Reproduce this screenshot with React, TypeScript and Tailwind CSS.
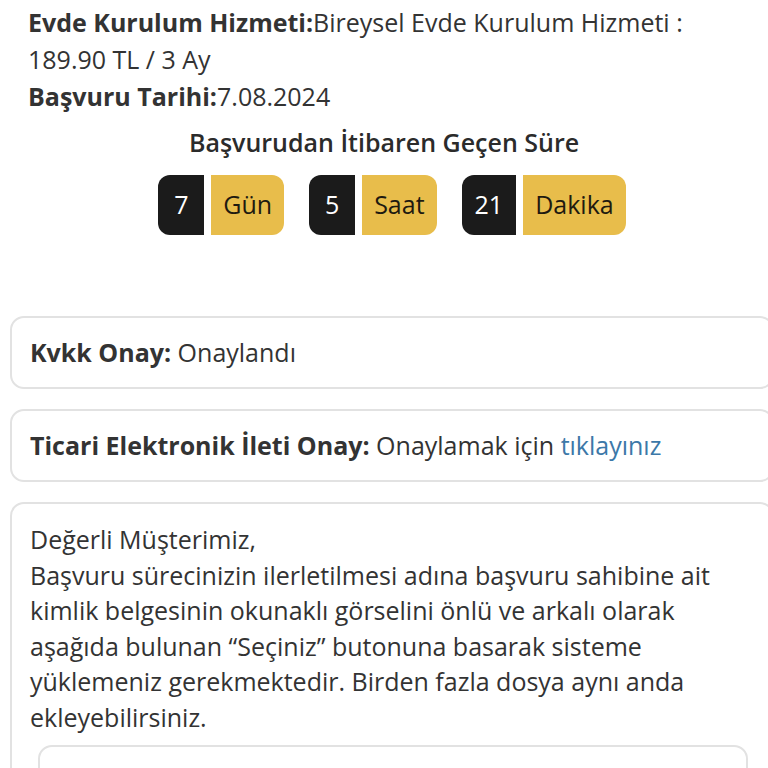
const Badge = ({ value, label }: { value: string; label: string }) => (
  <div className="flex h-[60px] gap-[7px]">
    <div className="flex min-w-[46px] items-center justify-center rounded-l-[12px] bg-[#1b1b1b] px-[13px] text-white">
      {value}
    </div>
    <div className="flex items-center justify-center rounded-r-[12px] bg-[#e8bd4b] px-[12px] text-[#1e1a10]">{label}</div>
  </div>
);

const App = () => {
  return (
    <div className="min-h-[768px] overflow-hidden bg-white font-['Open_Sans',sans-serif] text-[#333]">
      <div className="px-[28px] pt-[4px] text-[25px] leading-[37px]">
        <p>
          <span className="font-bold">Evde Kurulum Hizmeti:</span>Bireysel Evde Kurulum Hizmeti :
          <br />
          189.90 TL / 3 Ay
        </p>
        <p>
          <span className="font-bold">Başvuru Tarihi:</span>7.08.2024
        </p>
      </div>

      <h2 className="mt-[11px] text-center text-[25px] font-semibold leading-[32px] text-[#2b2b2b]">
        Başvurudan İtibaren Geçen Süre
      </h2>

      <div className="mt-[17px] flex justify-center gap-[25px] pl-[16px] text-[25px]">
        <Badge value="7" label="Gün" />
        <Badge value="5" label="Saat" />
        <Badge value="21" label="Dakika" />
      </div>

      <div className="mt-[81px] flex flex-col gap-[20px] pl-[10px] text-[25px]">
        <div className="flex h-[73px] w-[764px] items-center rounded-[14px] border-2 border-[#e2e2e2] px-[18px]">
          <p>
            <span className="font-bold">Kvkk Onay:</span> Onaylandı
          </p>
        </div>
        <div className="flex h-[73px] w-[764px] items-center rounded-[14px] border-2 border-[#e2e2e2] px-[18px]">
          <p>
            <span className="font-bold">Ticari Elektronik İleti Onay:</span> Onaylamak için{' '}
            <a className="text-[#3c78a8]">tıklayınız</a>
          </p>
        </div>
        <div className="w-[764px] rounded-[14px] border-2 border-[#e2e2e2] px-[18px] pt-[18px] pb-[20px]">
          <p className="leading-[35.6px]">
            Değerli Müşterimiz,
            <br />
            Başvuru sürecinizin ilerletilmesi adına başvuru sahibine ait
            <br />
            kimlik belgesinin okunaklı görselini önlü ve arkalı olarak
            <br />
            aşağıda bulunan “Seçiniz” butonuna basarak sisteme
            <br />
            yüklemeniz gerekmektedir. Birden fazla dosya aynı anda
            <br />
            ekleyebilirsiniz.
          </p>
          <div className="mt-[9px] ml-[8px] h-[80px] w-[710px] rounded-[14px] border-2 border-[#e2e2e2]"></div>
        </div>
      </div>
    </div>
  );
};

export default App;
